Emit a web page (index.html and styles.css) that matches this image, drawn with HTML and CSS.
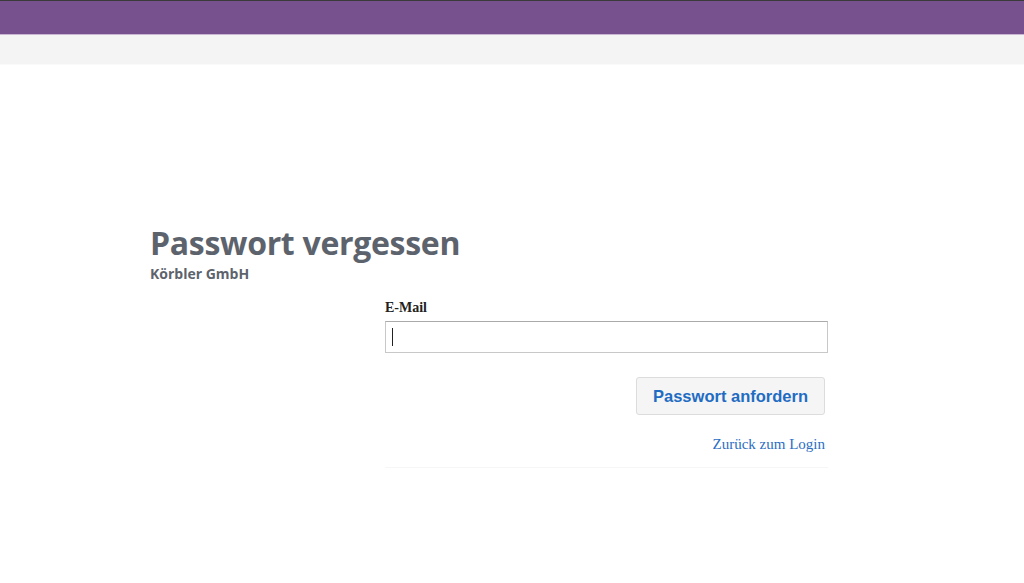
FILE: index.html
```html
<!DOCTYPE html>
<html lang="de">
<head>
<meta charset="utf-8">
<title>Passwort vergessen</title>
<link rel="stylesheet" href="styles.css">
</head>
<body>
<header class="topbar"></header>
<div class="subbar"></div>
<main class="page">
  <div class="heading">
    <h1 class="title">Passwort vergessen</h1>
    <div class="company">Körbler GmbH</div>
  </div>
  <form class="form">
    <label class="label" for="email">E-Mail</label>
    <div class="input"><span class="caret"></span></div>
    <div class="actions">
      <button type="button" class="btn">Passwort anfordern</button>
    </div>
    <div class="links">
      <a class="back" href="#">Zurück zum Login</a>
    </div>
  </form>
</main>
</body>
</html>
```
FILE: styles.css
```css
html, body {
  margin: 0;
  padding: 0;
  background: #ffffff;
}
body {
  font-family: "Liberation Serif", serif;
}
.topbar {
  height: 33px;
  background: #77518d;
  border-top: 1px solid #3a3a3a;
  border-bottom: 1px solid #c9b6d3;
}
.subbar {
  height: 29px;
  background: #f4f4f4;
  border-bottom: 1px solid #fafafa;
}
.page {
  padding: 158px 0 0 150px;
}
.title {
  margin: 0;
  font-family: "Open Sans", sans-serif;
  font-weight: 700;
  font-size: 32px;
  line-height: 40px;
  letter-spacing: -0.3px;
  color: #5d636c;
}
.company {
  font-family: "Open Sans", sans-serif;
  font-weight: 700;
  font-size: 14px;
  line-height: 18px;
  color: #5d636c;
  margin-top: 2px;
}
.form {
  width: 443px;
  margin: 16px 0 0 235px;
}
.label {
  display: block;
  font-family: "Liberation Serif", serif;
  font-weight: 700;
  font-size: 14px;
  line-height: 18px;
  color: #222;
  margin-bottom: 4px;
}
.input {
  height: 30px;
  border: 1px solid #c8c8c8;
  border-top-color: #ababab;
  display: flex;
  align-items: center;
  padding-left: 6px;
}
.caret {
  width: 1px;
  height: 18px;
  background: #222;
}
.actions {
  display: flex;
  justify-content: flex-end;
  margin-top: 24px;
  padding-right: 3px;
}
.btn {
  height: 38px;
  width: 189px;
  padding: 0;
  background: #f5f5f5;
  border: 1px solid #dcdcdc;
  border-radius: 3px;
  font-family: "Liberation Sans", sans-serif;
  font-weight: 700;
  font-size: 16.5px;
  color: #1f6cc3;
}
.links {
  display: flex;
  justify-content: flex-end;
  padding: 20px 3px 14px 0;
  border-bottom: 1px solid #f6f6f6;
}
.back {
  font-family: "Liberation Serif", serif;
  font-size: 15px;
  line-height: 18px;
  color: #2c6ec2;
  text-decoration: none;
}
```
